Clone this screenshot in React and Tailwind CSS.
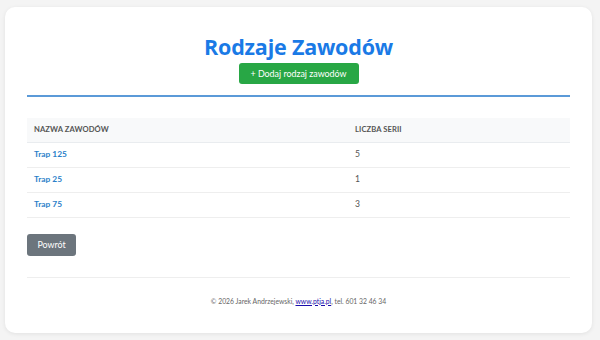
export default function App() {
  const rows = [
    { name: "Trap 125", n: 5 },
    { name: "Trap 25", n: 1 },
    { name: "Trap 75", n: 3 },
  ];
  return (
    <div className="w-[600px] h-[340px] bg-[#f4f4f4] pt-[7px] pl-[5px]" style={{ fontFamily: 'Lato, "Open Sans", sans-serif' }}>
      <div className="w-[587px] h-[326px] bg-white rounded-[10px] shadow-[0_1px_4px_rgba(0,0,0,0.08)] px-[22px] pt-[25px]">
        <div className="flex flex-col items-center">
          <h1 className="text-[21.5px] leading-[30px] font-bold text-[#1a7ae6] tracking-[-0.2px]" style={{ fontFamily: '"Open Sans", sans-serif' }}>Rodzaje Zawodów</h1>
          <button className="mt-[1px] h-[21px] w-[120px] rounded-[3px] bg-[#28a745] text-white text-[8.9px] leading-[21px]">+ Dodaj rodzaj zawodów</button>
        </div>
        <div className="mt-[11px] h-[2px] bg-[#5b9ad8]" />
        <table className="mt-[21px] w-full border-collapse">
          <thead>
            <tr className="bg-[#f8f9fa] h-[24px] border-b border-[#e9ecef]">
              <th className="text-left font-bold text-[#555] pl-[7px] text-[7.6px] tracking-[0.1px] w-[328px]">NAZWA ZAWODÓW</th>
              <th className="text-left font-bold text-[#555] text-[7.6px] tracking-[0.1px]">LICZBA SERII</th>
            </tr>
          </thead>
          <tbody>
            {rows.map((r) => (
              <tr key={r.name} className="h-[25px] border-b border-[#eeeeee]">
                <td className="pl-[7px] font-bold text-[#2a7fc9] text-[8.4px]">{r.name}</td>
                <td className="text-[#555] text-[8.6px]">{r.n}</td>
              </tr>
            ))}
          </tbody>
        </table>
        <button className="mt-[16px] h-[22px] w-[49px] rounded-[3px] bg-[#6c757d] text-white text-[8.9px] leading-[22px] block">Powrót</button>
        <div className="mt-[21px] h-px bg-[#eeeeee]" />
        <p className="mt-[18px] text-center text-[6.8px] text-[#666]">
          © 2026 Jarek Andrzejewski, <a className="text-[#1a0dab] underline">www.ptja.pl</a>, tel. 601 32 46 34
        </p>
      </div>
    </div>
  );
}
